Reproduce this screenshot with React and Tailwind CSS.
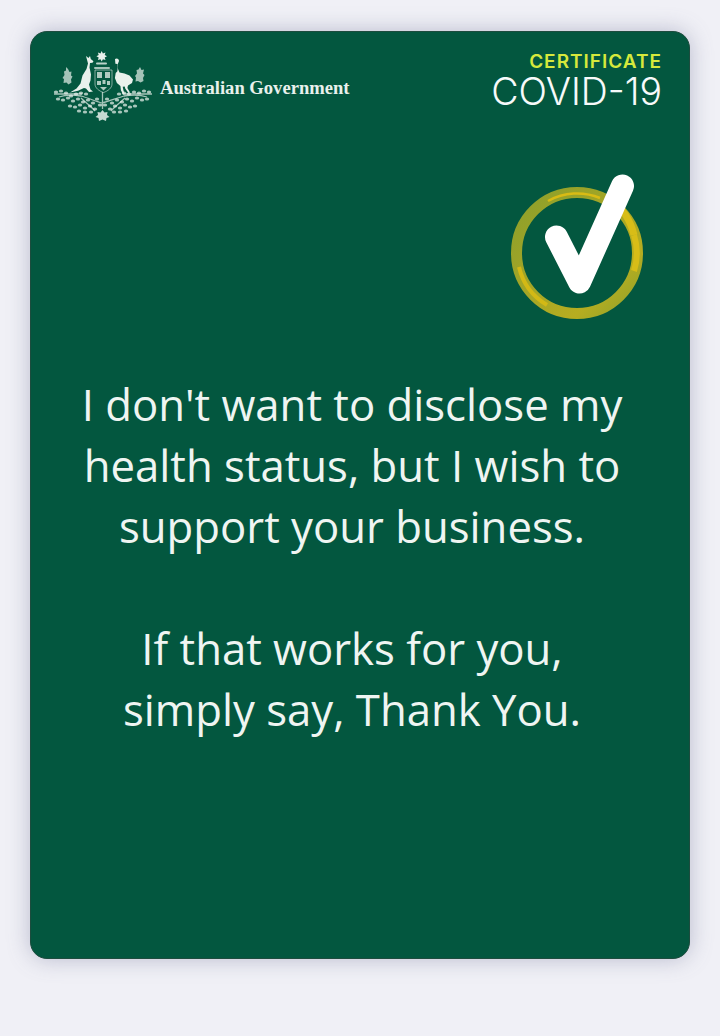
// mottled leaf clusters of the wreath below the shield
const leaves = [
  [3, 42], [8, 41], [13, 43], [18, 46], [23, 44], [28, 43], [33, 44],
  [96, 42], [91, 41], [86, 43], [81, 42], [76, 44], [71, 43], [66, 44],
  [5, 49], [10, 50], [15, 48], [20, 51], [25, 49], [30, 52], [35, 50], [40, 53],
  [94, 49], [89, 50], [84, 48], [79, 51], [74, 49], [69, 52], [64, 50], [59, 53],
  [17, 56], [22, 57], [27, 55], [32, 58], [37, 56], [42, 59], [47, 55], [52, 55],
  [82, 56], [77, 57], [72, 55], [67, 58], [62, 56], [57, 59],
  [26, 61], [32, 62], [38, 62], [73, 61], [67, 62], [61, 62], [44, 49], [54, 49],
];

function CoatOfArms() {
  return (
    <svg width="100" height="72" viewBox="0 0 100 72" fill="#e9f1ec" className="shrink-0 blur-[0.5px]">
      {/* star */}
      <path d="M48.700 1l1.200 2.400 2.600-.8-.8 2.500 2.300 1.200-2.300 1.200.8 2.500-2.600-.8-1.200 2.300-1.200-2.300-2.600.8.8-2.500-2.300-1.200 2.300-1.200-.8-2.500 2.600.8z" />
      <rect x="43" y="12.500" width="11" height="2" rx="1" opacity="0.8" />
      <rect x="41" y="17" width="16" height="2" rx="1" opacity="0.7" />
      {/* kangaroo */}
      <path d="M33 6l2.500 2 1.500-2 .8 3 2.700 2.200-1 1.600-2.500.2-.5 4.500 1.500 7-.5 6-1.500 4 1.500 5 2.500 2-4 .5-3-3.500-2-.5-6 2.700-8 1.800 6.500-4 4-5 2-8 4-6.500 1.500-5.500z" />
      {/* emu */}
      <path d="M62 9c2-1.200 4-.2 4 2l-1.200 3 .2 5 1.500 3.500 5 1 5 2 3.500 4-1 3.500-4 2.500-.6 2.500 2.600 4.500-1.600.5-3.200-4.500-.5-2-2 .2.800 3.800 1 3.500-1.600.3-2-4-.5-4.300-3.500-3-2-5 .8-5 1.700-1.800.3-4-.3-3.300-2-.2z" />
      {/* shield */}
      <path d="M42 20h17v14c0 4-4 7-8.500 8.500C46 41 42 38 42 34z" fill="none" stroke="#e9f1ec" strokeWidth="0.800" opacity="0.7" />
      <path d="M44 22h5v6h-5zM52 22h5v6h-5zM44 31h4v4h-4zM49.500 30h3v4h-3zM54 31h3v4h-3zM47 37h7l-3.500 3.500z" opacity="0.75" />
      {/* foliage at the sides */}
      <path d="M13 17l2 2 1.500 3 2-.5-.5 4 1.500 1-1.500 3 .5 3-3 2-2-2-3 .5.500-4-1.500-1 2-3-.5-3.500 2-1z" opacity="0.7" />
      <path d="M87 17l1.500 3 2.500-.5-1 4 1.500 1.500-1.500 3 .5 3-3 1.500-2.500-1.500-2.500.5.500-4-1-1.500 2-2.500-.5-3.500 2-.5z" opacity="0.7" />
      {/* lower wreath */}
      <g fill="none" stroke="#e9f1ec" strokeWidth="1.300" opacity="0.7">
        <path d="M1 44h28M70 44h29" />
        <path d="M6 47c8-3 16-2 22-1 7 2 14 5 21 7 8-2 15-5 22-7 7-1 14-2 23 1" />
        <path d="M28 48c5 5 10 8 14 13M72 48c-5 5-10 8-14 13M49.500 42v17" />
      </g>
      {leaves.map(([x, y]) => (
        <ellipse key={`${x}-${y}`} cx={x} cy={y} rx="2.200" ry="1.500" opacity="0.72" />
      ))}
      {/* badge at the foot */}
      <path d="M49.500 60l2 2.500 3-.5-.5 3 2.500 2-3 1-.5 3-3.500-1.500-3.500 1.500-.5-3-3-1 2.500-2-.5-3 3 .5z" opacity="0.85" />
    </svg>
  );
}

function CheckBadge() {
  return (
    <svg width="134" height="146" viewBox="0 0 134 146">
      <defs>
        <linearGradient id="ring" x1="0" y1="0" x2="1" y2="1">
          <stop offset="0" stopColor="#8b9f2b" />
          <stop offset="0.45" stopColor="#a5a626" />
          <stop offset="0.75" stopColor="#b6ad20" />
          <stop offset="1" stopColor="#8fa22c" />
        </linearGradient>
      </defs>
      <circle cx="67" cy="80" r="60.500" fill="none" stroke="url(#ring)" strokeWidth="11" />
      {/* brighter yellow highlights on the ring */}
      <path d="M38 28a60 60 0 0 1 52-3" fill="none" stroke="#d9bb14" strokeWidth="2.500" />
      <path d="M124 62a60 60 0 0 1 0 36" fill="none" stroke="#d8bd17" strokeWidth="6" />
      <path d="M100 26a62 62 0 0 1 24 36" fill="none" stroke="#d8bd17" strokeWidth="7" />
      <path d="M9 94a60 60 0 0 0 28 38" fill="none" stroke="#d3b915" strokeWidth="4" />
      <path d="M46.500 64l23 45L112.500 13" fill="none" stroke="#ffffff" strokeWidth="23" strokeLinecap="round" strokeLinejoin="round" />
    </svg>
  );
}

export default function App() {
  return (
    <div className="h-[1036px] overflow-hidden bg-[#f0f0f6] pt-[31px] px-[30px]">
      <div className="h-[928px] rounded-[17px] bg-[#03573f] border border-[#1d4c3e] shadow-[0_0_22px_rgba(110,115,150,0.42)] text-white">
        {/* Header */}
        <div className="flex items-start justify-between pt-[18px] pl-[22px] pr-[27px]">
          <div className="flex items-center gap-[7px]">
            <CoatOfArms />
            <span className="font-['Liberation_Serif',serif] font-bold text-[18.600px] leading-none text-[#e9f1ec] mt-[4px]">
              Australian Government
            </span>
          </div>
          <div className="text-right font-['Inter',sans-serif] pt-[2px]">
            <div className="text-[19px] leading-[20px] font-semibold tracking-[1px] text-[#d6e93c]">
              CERTIFICATE
            </div>
            <div className="text-[37.500px] leading-[40px] font-[350] text-[#f7fafa]">
              COVID-19
            </div>
          </div>
        </div>

        {/* Check mark */}
        <div className="flex justify-end pr-[45px] mt-[51px]">
          <CheckBadge />
        </div>

        {/* Message */}
        <div className="mt-[55px] pr-[16px] text-center font-['Open_Sans',sans-serif] font-[370] text-[43.700px] leading-[61px] text-[#eff5f2]">
          <p>I don't want to disclose my</p>
          <p>health status, but I wish to</p>
          <p>support your business.</p>
          <p className="mt-[61px]">If that works for you,</p>
          <p>simply say, Thank You.</p>
        </div>
      </div>
    </div>
  );
}
